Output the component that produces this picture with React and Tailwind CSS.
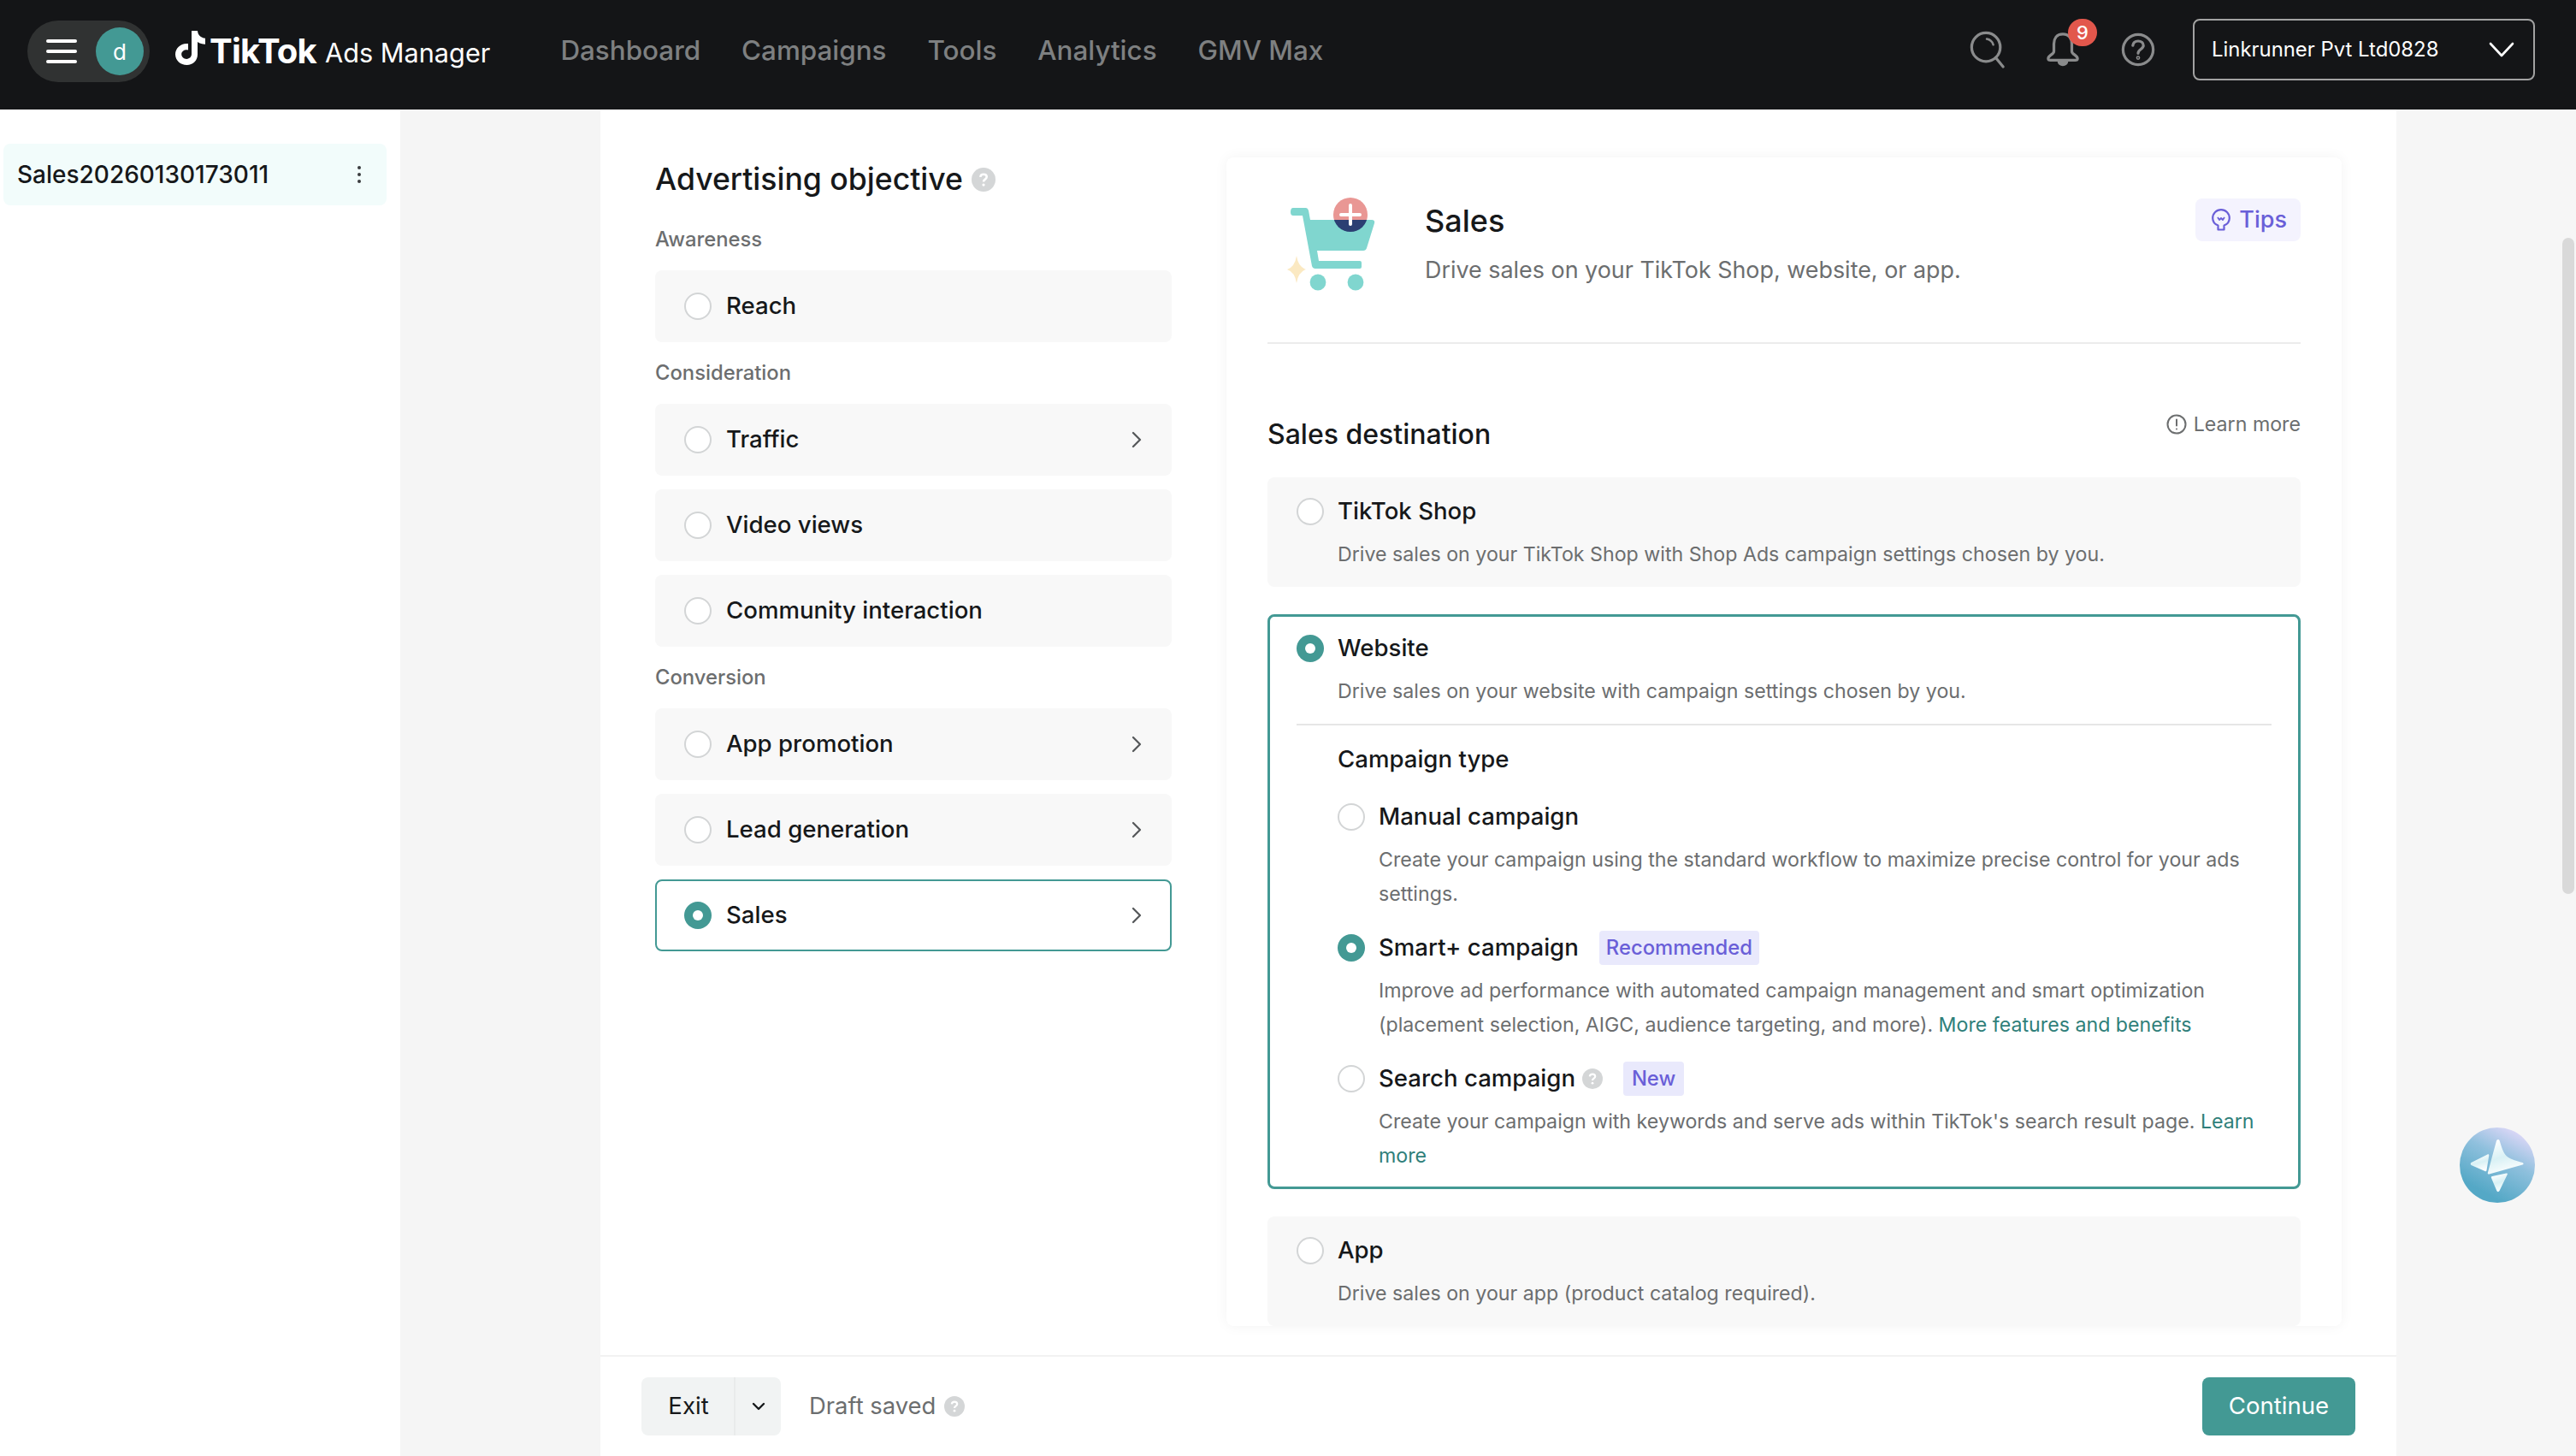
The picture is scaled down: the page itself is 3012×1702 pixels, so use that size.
import React from "react";
import { ChevronRight, ChevronDown } from "lucide-react";

function Radio({ on }) {
  return on ? (
    <span className="flex h-[32px] w-[32px] shrink-0 items-center justify-center rounded-full bg-[#439994]">
      <span className="h-[12px] w-[12px] rounded-full bg-white" />
    </span>
  ) : (
    <span className="h-[32px] w-[32px] shrink-0 rounded-full border-2 border-[#d3d5d6] bg-white" />
  );
}

function Help({ size }) {
  return (
    <svg width={size} height={size} viewBox="0 0 24 24" className="shrink-0">
      <circle cx="12" cy="12" r="12" fill="#d4d6d7" />
      <path d="M8.8 9.4C9 7.6 10.3 6.6 12 6.6c1.8 0 3.2 1.1 3.2 2.7 0 2.4-3.2 2.4-3.2 4.8" fill="none" stroke="#fff" strokeWidth="2.2" />
      <circle cx="12" cy="17.2" r="1.4" fill="#fff" />
    </svg>
  );
}

function Objective({ label, on, arrow }) {
  return (
    <div className={"flex h-[84px] items-center rounded-[8px] " + (on ? "border-2 border-[#439994] bg-white pl-[32px] pr-[23px]" : "bg-[#f8f8f8] pl-[34px] pr-[25px]")}>
      <Radio on={on} />
      <span className="ml-[17px] mt-[-2px] flex-1 text-[27.6px] font-medium leading-[36px] text-[#16181a]">{label}</span>
      {arrow && <ChevronRight size={32} strokeWidth={1.7} className="text-[#55585a]" />}
    </div>
  );
}

function GroupLabel({ children }) {
  return <div className="flex h-[72px] items-center text-[23.8px] font-medium text-[#6c6e6f]">{children}</div>;
}

function Destination({ label, desc }) {
  return (
    <div className="h-[128px] rounded-[8px] bg-[#f8f8f8] px-[34px] pt-[22px]">
      <div className="flex h-[36px] items-center gap-[16px]">
        <Radio />
        <span className="text-[27.6px] font-medium text-[#16181a]">{label}</span>
      </div>
      <p className="ml-[48px] mt-[14px] text-[23.2px] leading-[36px] text-[#6c6e6f]">{desc}</p>
    </div>
  );
}

function CampaignOption({ on, label, extra, children }) {
  return (
    <div>
      <div className="flex h-[40px] items-center gap-[16px]">
        <Radio on={on} />
        <span className="text-[27.6px] font-medium text-[#16181a]">{label}</span>
        {extra}
      </div>
      <p className="ml-[48px] mt-[10px] w-[1030px] text-[23.2px] leading-[40px] text-[#6c6e6f]">{children}</p>
    </div>
  );
}

function Tag({ children, wide }) {
  return <span className={"ml-[8px] flex h-[40px] items-center justify-center rounded-[4px] bg-[#e9e9fc] text-[23.8px] font-medium text-[#6a5fd8] " + (wide ? "px-[8px]" : "w-[71px]")}>{children}</span>;
}

function CartArt() {
  return (
    <svg width="110" height="114" viewBox="0 0 110 114" className="shrink-0">
      <defs>
        <clipPath id="topHalf"><rect x="50" y="0" width="60" height="29" /></clipPath>
        <clipPath id="lowHalf"><rect x="50" y="29" width="60" height="30" /></clipPath>
      </defs>
      <path d="M12 15H27Q29 15 30 18L32 29H104Q108 29 107 33L98 62Q97 65 94 65H40L42 77H90Q92 77 92 79V84Q92 86 90 86H38Q35 86 34 83L23 24H12Q9 24 9 20Q9 15 12 15Z" fill="#80d6cf" />
      <circle cx="41" cy="102" r="9.4" fill="#80d6cf" />
      <circle cx="85" cy="102" r="9.4" fill="#80d6cf" />
      <circle cx="79" cy="23" r="20" fill="#e99794" clipPath="url(#topHalf)" />
      <circle cx="79" cy="23" r="20" fill="#2b3f73" clipPath="url(#lowHalf)" />
      <path d="M68 23H90M79 12V34" stroke="#fff" strokeWidth="4" strokeLinecap="round" />
      <path d="M16 71Q18 84 27 87Q18 90 16 103Q14 90 5 87Q14 84 16 71Z" fill="#fbe9c2" />
    </svg>
  );
}

function Logo() {
  return (
    <div className="ml-[28px] flex items-center">
      <svg width="38" height="42" viewBox="0 0 38 42" className="mb-[8px] shrink-0">
        <path d="M21 1h7c.4 5 3.700 8.200 9 8.800v7c-3.400 0-6.400-1-9-2.800v14.500C28 36 22.500 41 15.500 41 8 41 2 35.500 2 28.500 2 21 8.700 15 17 16v7.500c-4-.8-7.800 1.300-7.800 5 0 3 2.700 5.400 6 5.400 3.500 0 5.800-2.400 5.800-5.800z" fill="#fff" />
      </svg>
      <span className="ml-[4px] text-[40px] font-bold leading-none tracking-[-0.8px] text-white">TikTok</span>
      <span className="ml-[10px] mt-[4px] text-[30.7px] font-normal leading-none text-white">Ads Manager</span>
    </div>
  );
}

function Header() {
  return (
    <header className="flex h-[128px] shrink-0 items-center bg-[#141517] pb-[8px] pl-[32px] pr-[48px]">
      <div className="flex h-[72px] w-[143px] items-center rounded-full bg-[#303232] pl-[22px]">
        <div className="flex w-[36px] flex-col gap-[8px]">
          <span className="h-[4px] rounded-full bg-white" />
          <span className="h-[4px] rounded-full bg-white" />
          <span className="h-[4px] rounded-full bg-white" />
        </div>
        <span className="ml-[22px] flex h-[56px] w-[56px] items-center justify-center rounded-full bg-[#439994] text-[26px] text-white">d</span>
      </div>
      <Logo />
      <nav className="ml-[82px] flex gap-[48px] text-[31.4px] font-medium text-[#7e8081]">
        <span>Dashboard</span>
        <span>Campaigns</span>
        <span>Tools</span>
        <span>Analytics</span>
        <span>GMV Max</span>
      </nav>
      <div className="mb-[4px] ml-auto flex items-center">
        <svg width="42" height="46" viewBox="0 0 44 46" fill="none" stroke="#8a8b8c" strokeWidth="3.400" strokeLinecap="round">
          <circle cx="20" cy="20" r="17.500" />
          <path d="M32 33L41 44" />
          <path d="M21 10Q27 11 29 17" strokeWidth="2.600" />
        </svg>
        <div className="relative ml-[47px] h-[40px] w-[40px]">
          <svg width="40" height="40" viewBox="0 0 42 42" fill="none" stroke="#8a8b8c" strokeWidth="3.400" strokeLinejoin="round">
            <path d="M21 2C13 2 10 8 10 14V23C10 27 3 28 3 32C3 34 4 34 6 34H36C38 34 39 34 39 32C39 28 32 27 32 23V14C32 8 29 2 21 2Z" />
            <path d="M16 35C16 41 26 41 26 35" fill="#8a8b8c" />
          </svg>
          <span className="absolute left-[26px] top-[-16px] flex h-[32px] w-[34px] items-center justify-center rounded-full bg-[#e2574c] text-[22px] font-medium text-white">9</span>
        </div>
        <svg width="40" height="40" viewBox="0 0 42 42" fill="none" stroke="#8a8b8c" strokeWidth="3.400" strokeLinecap="round" className="ml-[48px]">
          <circle cx="21" cy="21" r="18.500" />
          <path d="M14.500 16C15 12 17.500 10.500 21 10.500C25 10.500 27.500 13 27.500 16C27.500 20.500 21 20.500 21 25.500" />
          <circle cx="21" cy="31" r="0.800" />
        </svg>
        <div className="ml-[44px] flex h-[72px] w-[400px] items-center justify-between rounded-[8px] border-2 border-[#a2a2a2] pl-[20px] pr-[22px] text-[23.900px] text-white">
          <span>Linkrunner Pvt Ltd0828</span>
          <svg width="30" height="18" viewBox="0 0 30 18" fill="none" stroke="#fff" strokeWidth="2.600" strokeLinecap="round" strokeLinejoin="round">
            <path d="M2 2L15 16L28 2" />
          </svg>
        </div>
      </div>
    </header>
  );
}

function Sidebar() {
  return (
    <aside className="w-[468px] shrink-0 bg-white pl-[4px] pr-[16px] pt-[40px]">
      <div className="flex h-[72px] items-center justify-between rounded-[8px] bg-[#f2fcfb] pl-[16px] pr-[30px]">
        <span className="text-[28px] font-medium text-[#16181a]">Sales20260130173011</span>
        <span className="flex flex-col gap-[4px]">
          <span className="h-[4px] w-[4px] rounded-full bg-[#3a3c3e]" />
          <span className="h-[4px] w-[4px] rounded-full bg-[#3a3c3e]" />
          <span className="h-[4px] w-[4px] rounded-full bg-[#3a3c3e]" />
        </span>
      </div>
    </aside>
  );
}

function ObjectiveColumn() {
  return (
    <section className="w-[604px] shrink-0">
      <div className="flex h-[52px] items-center gap-[10px]">
        <h1 className="text-[35.6px] font-medium text-[#16181a]">Advertising objective</h1>
        <Help size={28} />
      </div>
      <div className="mt-[8px]">
        <GroupLabel>Awareness</GroupLabel>
        <Objective label="Reach" />
        <GroupLabel>Consideration</GroupLabel>
        <div className="flex flex-col gap-[16px]">
          <Objective label="Traffic" arrow />
          <Objective label="Video views" />
          <Objective label="Community interaction" />
        </div>
        <GroupLabel>Conversion</GroupLabel>
        <div className="flex flex-col gap-[16px]">
          <Objective label="App promotion" arrow />
          <Objective label="Lead generation" arrow />
          <Objective label="Sales" arrow on />
        </div>
      </div>
    </section>
  );
}

function DetailCard() {
  return (
    <section className="flex-1 rounded-[8px] bg-white px-[48px] pt-[46px] shadow-[0_0_16px_rgba(0,0,0,0.05)]">
      <div className="flex h-[172px] border-b-2 border-[#ececec]">
        <div className="ml-[18px] mt-[-2px]"><CartArt /></div>
        <div className="ml-[56px] flex-1">
          <h2 className="mt-[6px] text-[36px] font-medium leading-[44px] text-[#16181a]">Sales</h2>
          <p className="mt-[17px] text-[26.9px] leading-[36px] text-[#6c6e6f]">Drive sales on your TikTok Shop, website, or app.</p>
        </div>
        <div className="mt-[2px] flex h-[50px] items-center gap-[10px] rounded-[8px] bg-[#f4f3fe] pl-[19px] pr-[16px] text-[27px] font-medium text-[#6a5fd8]">
          <svg width="22" height="26" viewBox="0 0 22 26" fill="none" stroke="#6a5fd8" strokeWidth="2.200" strokeLinejoin="round">
            <path d="M7.500 19.500C3.500 18 1.200 15 1.200 11 1.200 5.500 5.500 1.200 11 1.200S20.800 5.500 20.800 11c0 4-2.300 7-6.300 8.500v5H7.500z" />
            <path d="M7 10l2 3 2-2 2 2 2-3" strokeWidth="1.800" />
          </svg>
          Tips
        </div>
      </div>
      <div className="flex h-[156px] items-center justify-between pt-[55px]">
        <h3 className="text-[32px] font-medium text-[#16181a]">Sales destination</h3>
        <div className="mb-[22px] flex items-center gap-[8px] text-[23.2px] text-[#6c6e6f]">
          <svg width="24" height="24" viewBox="0 0 24 24" fill="none" stroke="#6c6e6f" strokeWidth="2" strokeLinecap="round">
            <circle cx="12" cy="12" r="10.500" />
            <path d="M12 6.500V13.500M12 17.500V17.600" />
          </svg>
          Learn more
        </div>
      </div>
      <Destination label="TikTok Shop" desc="Drive sales on your TikTok Shop with Shop Ads campaign settings chosen by you." />
      <div className="mt-[32px] h-[672px] rounded-[8px] border-[3px] border-[#439994] px-[31px] pt-[19px]">
        <div className="flex h-[36px] items-center gap-[16px]">
          <Radio on />
          <span className="text-[27.6px] font-medium text-[#16181a]">Website</span>
        </div>
        <p className="ml-[48px] mt-[14px] text-[23.2px] leading-[36px] text-[#6c6e6f]">Drive sales on your website with campaign settings chosen by you.</p>
        <div className="mt-[20px] border-t-2 border-[#e6e6e6] pl-[48px] pt-[21px]">
          <h4 className="text-[27.6px] font-medium leading-[36px] text-[#16181a]">Campaign type</h4>
          <div className="mt-[30px] flex flex-col gap-[23px]">
            <CampaignOption label="Manual campaign">
              Create your campaign using the standard workflow to maximize precise control for your ads settings.
            </CampaignOption>
            <CampaignOption on label="Smart+ campaign" extra={<Tag wide>Recommended</Tag>}>
              Improve ad performance with automated campaign management and smart optimization (placement selection, AIGC, audience targeting, and more). <span className="text-[#2f7f7a]">More features and benefits</span>
            </CampaignOption>
            <CampaignOption
              label={<span className="flex items-center gap-[8px]">Search campaign <Help size={24} /></span>}
              extra={<Tag>New</Tag>}
            >
              Create your campaign with keywords and serve ads within TikTok's search result page. <span className="text-[#2f7f7a]">Learn more</span>
            </CampaignOption>
          </div>
        </div>
      </div>
      <div className="mt-[32px]">
        <Destination label="App" desc="Drive sales on your app (product catalog required)." />
      </div>
    </section>
  );
}

function Footer() {
  return (
    <footer className="flex h-[118px] shrink-0 items-center border-t-2 border-[#f2f2f2] bg-white pl-[48px] pr-[48px]">
      <div className="flex h-[68px] w-[163px] items-center overflow-hidden rounded-[8px] bg-[#f1f3f3] text-[27.6px] text-[#16181a]">
        <span className="flex h-full w-[110px] items-center justify-center border-r-2 border-[#e9ebeb] pl-[2px]">Exit</span>
        <span className="flex flex-1 items-center justify-center"><ChevronDown size={24} strokeWidth={2.4} /></span>
      </div>
      <span className="ml-[33px] text-[27.4px] text-[#6c6e6f]">Draft saved</span>
      <span className="ml-[10px]"><Help size={24} /></span>
      <button className="ml-auto h-[68px] w-[179px] rounded-[8px] bg-[#439994] text-[27.6px] text-white">Continue</button>
    </footer>
  );
}

function Assistant() {
  return (
    <svg width="88" height="88" viewBox="0 0 88 88" className="absolute left-[74px] top-[1190px]">
      <defs>
        <linearGradient id="orb" x1="0.75" y1="0.02" x2="0.3" y2="0.85">
          <stop offset="0" stopColor="#dfd8f8" />
          <stop offset="0.45" stopColor="#8fc0dd" />
          <stop offset="1" stopColor="#54a8c6" />
        </linearGradient>
        <linearGradient id="star" x1="0.3" y1="0" x2="0.6" y2="1">
          <stop offset="0" stopColor="#ffffff" />
          <stop offset="0.5" stopColor="#d9f1f5" />
          <stop offset="1" stopColor="#ffffff" />
        </linearGradient>
      </defs>
      <circle cx="44" cy="44" r="44" fill="url(#orb)" />
      <path d="M43 15.500C44 13.500 46 13.500 46.700 15.500C49 23 51 30 55 33.500C60 37.500 68 39.500 73.500 41C75 41.800 75 43 73.500 43.500L34.500 54.500C33.200 54.800 32.500 54 32.800 53Z" fill="url(#star)" />
      <path d="M13.500 41L32.500 31.500C33.800 31 34.500 31.800 34.200 33L31.500 50C31.200 51.200 30.500 51.500 29.500 51L13.500 44C12.500 43.500 12.500 41.500 13.500 41Z" fill="url(#star)" />
      <path d="M38 57L54.500 53.500C55.700 53.300 56.200 54 55.700 55L46.500 74C45.500 75.500 44 75.500 43.300 74L37 59C36.600 58 37 57.200 38 57Z" fill="url(#star)" />
    </svg>
  );
}

export default function App() {
  return (
    <div className="flex h-[1702px] w-[3012px] flex-col overflow-hidden bg-white [font-family:Inter,sans-serif]">
      <Header />
      <div className="flex min-h-0 flex-1">
        <Sidebar />
        <div className="w-[234px] shrink-0 bg-[#f5f5f5]" />
        <main className="flex w-[2100px] shrink-0 flex-col bg-white">
          <div className="flex min-h-0 flex-1 items-start gap-[64px] overflow-hidden px-[64px] pt-[56px]">
            <ObjectiveColumn />
            <DetailCard />
          </div>
          <Footer />
        </main>
        <div className="relative flex-1 bg-[#f6f6f6]">
          <Assistant />
          <div className="absolute left-[194px] top-[150px] h-[767px] w-[14px] rounded-full bg-[#d9d9d9]" />
        </div>
      </div>
    </div>
  );
}
